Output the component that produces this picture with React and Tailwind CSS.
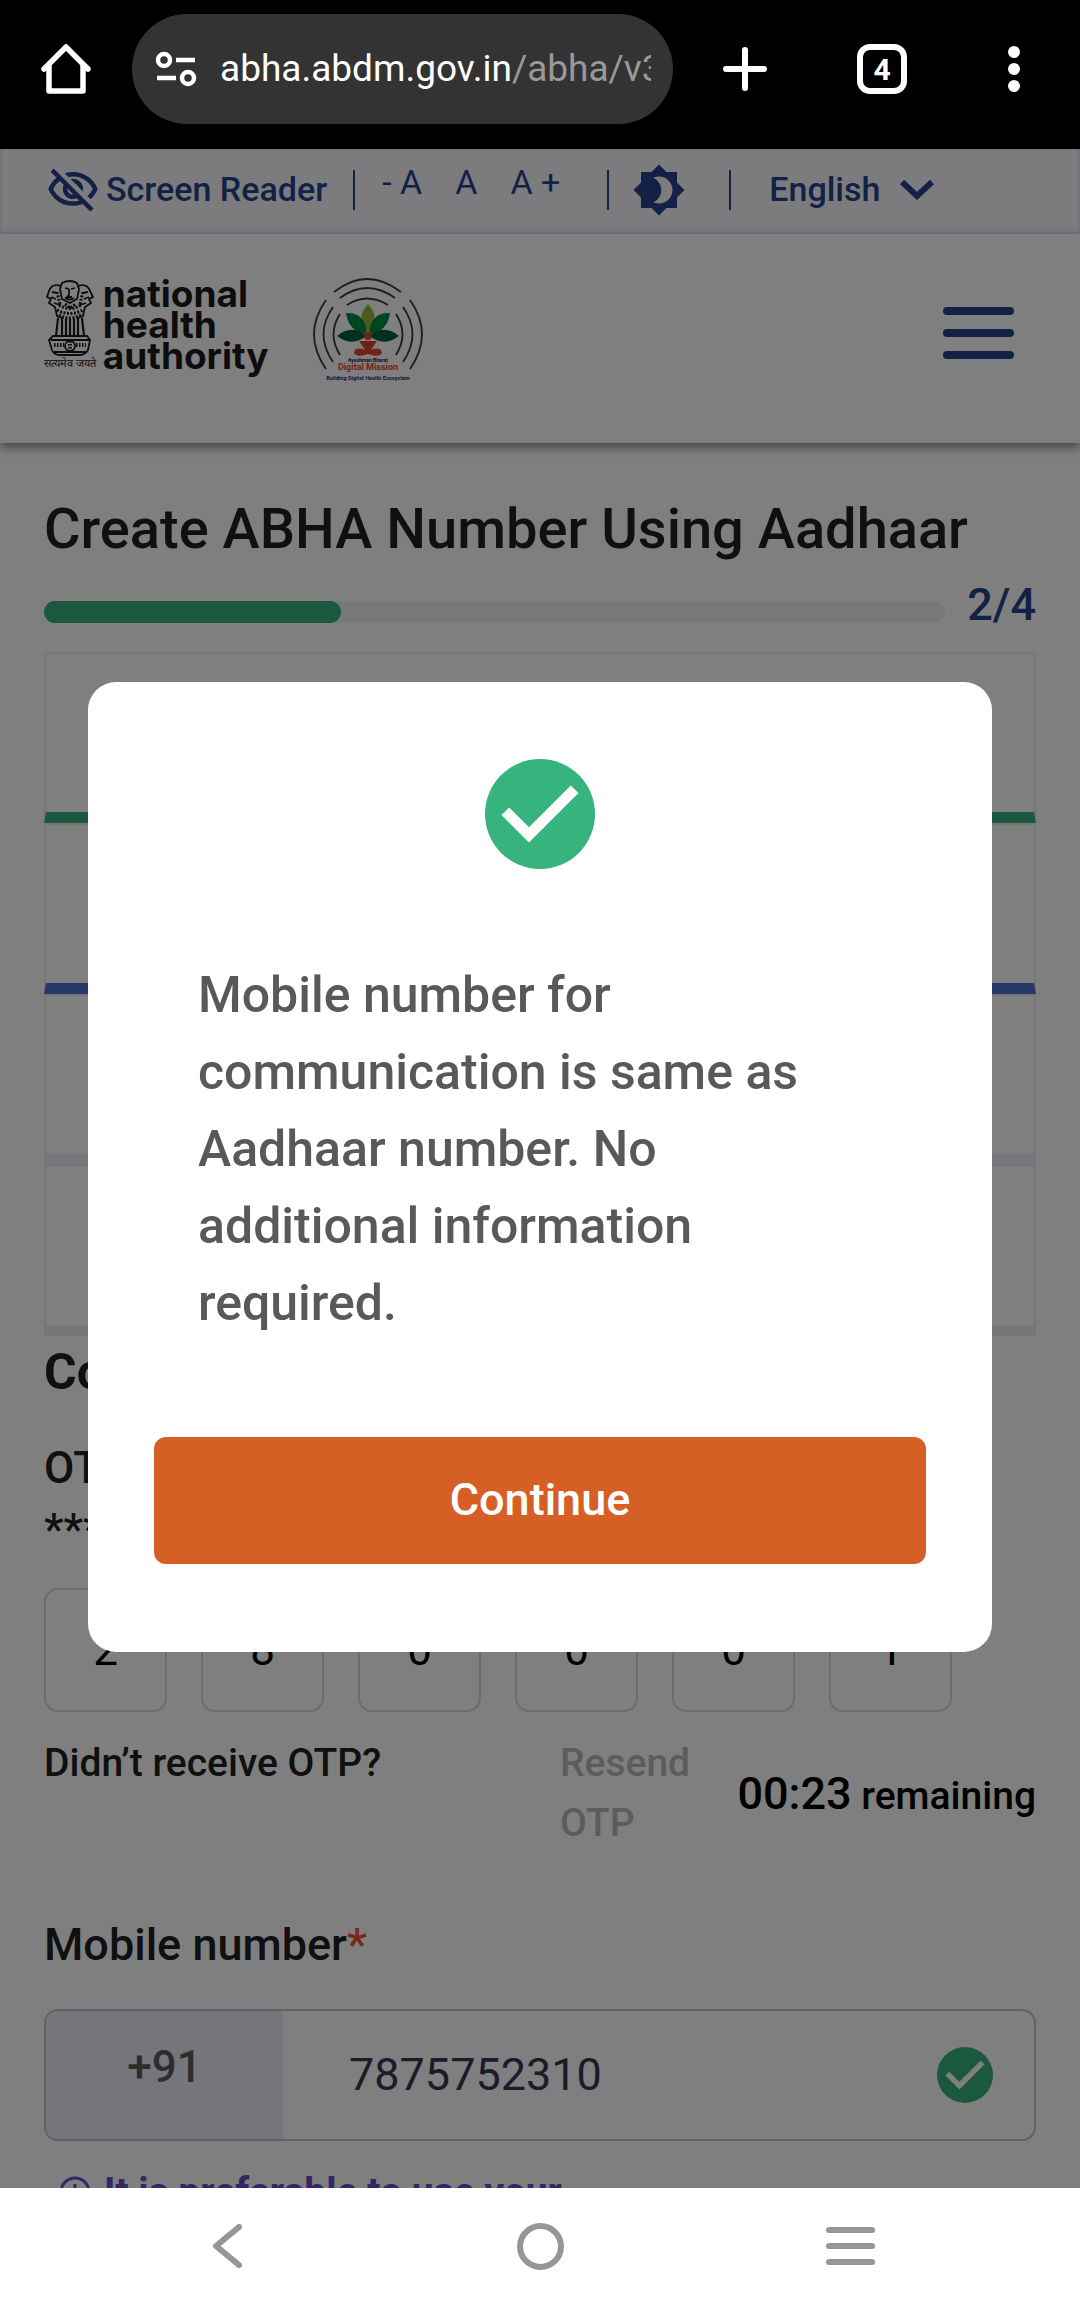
import React, { useState } from "react";

const otpDigits = ["2", "8", "0", "0", "0", "1"];
const steps = [
  "border-b-[#37b37e]",
  "border-b-[#4c6fd0]",
  "border-b-[#ededf7]",
  "border-b-[#ededf7]",
];

function CheckBadge({ className }) {
  return (
    <svg className={className} viewBox="2 2 20 20" aria-hidden="true">
      <circle cx="12" cy="12" r="10" fill="#37b37e" />
      <path d="M10 17.2l-5-5 1.4-1.4 3.6 3.6 7.6-7.6L19 8.2z" fill="#fff" />
    </svg>
  );
}

function BrowserBar() {
  return (
    <header className="flex h-[149px] items-start bg-black pt-[14px] text-white">
      <div className="flex h-[110px] w-full items-center">
        <button aria-label="Home" className="ml-[36px] flex w-[60px] justify-center">
          <svg className="h-[56px] w-[56px]" viewBox="0 0 56 56" fill="none" stroke="currentColor" strokeWidth="5.5">
            <path d="M6 28L28 6L50 28M11 24V50H45V24" strokeLinejoin="round" strokeLinecap="round" />
          </svg>
        </button>
        <div className="ml-[36px] flex h-[110px] min-w-0 flex-1 items-center rounded-full bg-[#333] px-[22px]">
          <button aria-label="Site information" className="shrink-0">
            <svg className="h-[44px] w-[44px]" viewBox="0 0 44 44" fill="none" stroke="currentColor" strokeWidth="4.5">
              <circle cx="10" cy="13" r="6" />
              <path d="M22 13H41M3 31H22" />
              <circle cx="34" cy="31" r="6" />
            </svg>
          </button>
          <div className="ml-[22px] overflow-hidden whitespace-nowrap text-[37px] leading-[50px]">
            abha.abdm.gov.in<span className="text-[#999]">/abha/v3</span>
          </div>
        </div>
        <div className="flex w-[407px] shrink-0 items-center pl-[50px]">
          <button aria-label="New tab">
            <svg className="h-[44px] w-[44px]" viewBox="0 0 44 44" stroke="currentColor" strokeWidth="6" strokeLinecap="round">
              <path d="M22 3V41M3 22H41" />
            </svg>
          </button>
          <button aria-label="Switch tabs" className="ml-[90px] flex h-[50px] w-[50px] items-center justify-center rounded-[13px] border-[6px] border-white text-[30px] font-bold">
            4
          </button>
          <button aria-label="Menu" className="ml-[100px]">
            <svg className="h-[46px] w-[14px]" viewBox="0 0 14 46" fill="currentColor">
              <circle cx="7" cy="6" r="6" />
              <circle cx="7" cy="23" r="6" />
              <circle cx="7" cy="40" r="6" />
            </svg>
          </button>
        </div>
      </div>
    </header>
  );
}

function Divider() {
  return <span className="block h-[40px] w-[2px] bg-[#25428b]" />;
}

function UtilityBar() {
  return (
    <div className="flex h-[85px] items-center border-2 border-t-0 border-[#e8e8f0] bg-[#f8f8fe] pb-[2px] text-[#25428b]">
      <button className="ml-[44px] flex items-center gap-[6px] text-[34px] font-medium">
        <svg className="h-[54px] w-[54px]" viewBox="0 0 24 24" fill="currentColor" aria-hidden="true">
          <path d="M12 6c3.79 0 7.17 2.13 8.82 5.5-.59 1.22-1.42 2.27-2.41 3.12l1.41 1.41c1.39-1.23 2.49-2.77 3.18-4.53C21.27 7.11 17 4 12 4c-1.27 0-2.49.2-3.64.57l1.65 1.65C10.66 6.09 11.32 6 12 6zm-1.07 1.14L13 9.21c.57.25 1.03.71 1.28 1.28l2.07 2.07c.08-.34.14-.7.14-1.07C16.5 9.01 14.48 7 12 7c-.37 0-.72.05-1.07.14zM2.01 3.87l2.68 2.68C3.06 7.83 1.77 9.53 1 11.5 2.73 15.89 7 19 12 19c1.52 0 2.98-.29 4.32-.82l3.42 3.42 1.41-1.41L3.42 2.45 2.01 3.87zm7.5 7.5l2.61 2.61c-.04.01-.08.02-.12.02-1.38 0-2.5-1.12-2.5-2.5 0-.05.01-.08.01-.13zm-3.4-3.4l1.75 1.75c-.23.55-.36 1.15-.36 1.78 0 2.48 2.02 4.5 4.5 4.5.63 0 1.23-.13 1.77-.36l.98.98c-.88.24-1.8.38-2.75.38-3.79 0-7.17-2.13-8.82-5.5.7-1.43 1.72-2.61 2.93-3.53z" />
        </svg>
        Screen Reader
      </button>
      <div className="ml-[26px]"><Divider /></div>
      <div className="mb-[14px] ml-[27px] flex gap-[33px] text-[34px]">
        <button>- A</button>
        <button>A</button>
        <button>A +</button>
      </div>
      <div className="ml-[47px]"><Divider /></div>
      <button aria-label="Toggle contrast" className="ml-[23px]">
        <svg className="h-[54px] w-[54px]" viewBox="0 0 24 24" fill="currentColor">
          <path fillRule="evenodd" d="M20 8.69V4h-4.69L12 .69 8.69 4H4v4.69L.69 12 4 15.31V20h4.69L12 23.31 15.31 20H20v-4.69L23.31 12 20 8.69zM12 18c-.89 0-1.74-.2-2.5-.55C11.56 16.5 13 14.42 13 12s-1.44-4.5-3.5-5.45C10.26 6.2 11.11 6 12 6c3.31 0 6 2.69 6 6s-2.69 6-6 6z" />
        </svg>
      </button>
      <div className="ml-[43px]"><Divider /></div>
      <button className="ml-[38px] flex items-center gap-[20px] text-[34px] font-medium">
        English
        <svg className="h-[22px] w-[34px]" viewBox="0 0 34 22" fill="none" stroke="currentColor" strokeWidth="6" aria-hidden="true">
          <path d="M2 3L17 17L32 3" />
        </svg>
      </button>
    </div>
  );
}

function Emblem() {
  return (
    <svg className="h-[76px] w-[50px]" viewBox="0 0 50 76" fill="none" stroke="#1b1b1b" strokeWidth="1.8" aria-hidden="true">
      <path d="M17 3q8-4 15 0l2 6-2 10-7 4-8-4-2-10zM20 8l4 1M26 9l4-1M24 9v6l-2 2h5M20 18q5 3 9 0" />
      <path d="M16 6Q7 3 4 11L2 17l4 2-2 4 6 4 2 9 5 2M33 6q9-3 12 5l3 6-4 2 2 4-6 4-2 9-5 2" />
      <path d="M7 12l5 1M6 17l5 2M9 23l6 2M43 12l-5 1M44 17l-5 2M41 23l-6 2" />
      <path strokeDasharray="2 1.5" strokeWidth="3" d="M12 12l3 12M38 12l-3 12M14 25q11 7 22 0M12 30q13 7 26 0M14 35q11 6 22 0M20 24l5 4 6-4" />
      <path strokeWidth="2.2" d="M13 38l-2 18M17 38v18M21 39v17M25 39v16M29 39v17M33 38v18M37 38l2 18" />
      <path d="M8 56h34l3 4-2 10q-3 5-8 5H15q-6 0-8-5L4 60zM6 60h38M9 72h33" />
      <circle cx="25" cy="66" r="5" />
      <path strokeDasharray="1.5 1.5" strokeWidth="4" d="M9 65h10M31 65h10M25 61v10" />
    </svg>
  );
}

function AbdmLogo() {
  return (
    <svg className="h-[104px] w-[110px]" viewBox="0 0 110 104" role="img" aria-label="Ayushman Bharat Digital Mission">
      <g fill="none" stroke="#3a3a3a" strokeWidth="1.8">
        <path d="M21 14Q54-12 88 14M27 20Q54 0 82 20M34 27Q54 14 75 27" />
        <path d="M13 22Q-11 56 13 91M20 29Q1 56 20 84M27 36Q14 56 27 77" />
        <path d="M97 22Q121 56 97 91M90 29Q109 56 90 84M83 36Q96 56 83 77" />
      </g>
      <path d="M55 26Q68 40 55 54Q42 40 55 26Z" fill="#97b93b" />
      <path d="M33 35Q52 34 54 55Q36 55 33 35ZM77 35Q58 34 56 55Q74 55 77 35Z" fill="#008a45" />
      <path d="M24 58Q38 46 54 57Q40 70 24 58ZM86 58Q72 46 56 57Q70 70 86 58Z" fill="#006338" />
      <g fill="#e3432b">
        <circle cx="55" cy="58" r="4" />
        <path d="M46 63H64L58 72Q68 68 69 75Q66 80 55 76Q44 80 41 75Q42 68 52 72Z" />
      </g>
      <text x="55" y="84" textAnchor="middle" fontSize="5" fontWeight="700" fill="#222">Ayushman Bharat</text>
      <text x="55" y="92" textAnchor="middle" fontSize="9" fontWeight="700" fill="#e3432b">Digital Mission</text>
      <text x="55" y="102" textAnchor="middle" fontSize="5.5" fontWeight="700" fill="#242a8c">Building Digital Health Ecosystem</text>
    </svg>
  );
}

function SiteHeader() {
  return (
    <div className="flex h-[209px] items-start bg-white px-[44px] pt-[44px] shadow-[0_4px_10px_rgba(40,50,70,0.6)]">
      <a href="#nha" className="flex" aria-label="National Health Authority">
        <span className="mt-[2px] flex flex-col items-center">
          <Emblem />
          <span className="text-[11px] leading-[16px] text-[#1b1b1b]">सत्यमेव जयते</span>
        </span>
        <span className="ml-[7px] font-['Inter',sans-serif] text-[37px] font-bold leading-[31px] text-[#1b1b1b]">
          <span className="block">national</span>
          <span className="block">health</span>
          <span className="block">authority</span>
        </span>
      </a>
      <a href="#abdm" className="ml-[44px]"><AbdmLogo /></a>
      <button aria-label="Open menu" className="ml-auto mr-[22px] mt-[29px] flex w-[71px] flex-col gap-[14px]">
        <span className="h-[8px] rounded-full bg-[#25428b]" />
        <span className="h-[8px] rounded-full bg-[#25428b]" />
        <span className="h-[8px] rounded-full bg-[#25428b]" />
      </button>
    </div>
  );
}

function EnrolmentForm() {
  return (
    <main className="px-[44px] pt-[48px] text-[#212121]">
      <h1 className="text-[56px] font-medium leading-[76px]">Create ABHA Number Using Aadhaar</h1>
      <div className="mt-[8px] flex items-center">
        <div role="progressbar" aria-label="Enrolment progress" aria-valuenow={33} aria-valuemin={0} aria-valuemax={100} className="mt-[14px] h-[22px] flex-1 rounded-full bg-[#f1f1f1]">
          <div className="h-full w-[33%] rounded-full bg-[#37b37e]" />
        </div>
        <span className="ml-[22px] text-[45px] font-medium leading-[60px] text-[#25428b]">2/4</span>
      </div>
      <div className="mt-[17px]">
        {steps.map((tone, i) => (
          <div key={i} className={`h-[171px] border-2 border-b-[11px] border-[#ededf5] ${tone}`} />
        ))}
      </div>
      <h2 className="mt-[6px] text-[50px] font-bold leading-[60px]">Confirm OTP</h2>
      <p className="mt-[35px] text-[44px] font-medium leading-[62px]">OTP sent to mobile number<br />******2310</p>
      <div className="mt-[27px] flex gap-[34px]">
        {otpDigits.map((d, i) => (
          <input
            key={i}
            aria-label={`OTP digit ${i + 1}`}
            defaultValue={d}
            className="h-[124px] w-[123px] rounded-[14px] border-2 border-[#d8d8d8] text-center text-[44px] text-black"
          />
        ))}
      </div>
      <div className="mt-[21px] flex text-[39px] font-medium leading-[60px]">
        <span className="w-[516px]">Didn’t receive OTP?</span>
        <button disabled className="w-[140px] text-left text-[#b9b9b9]">Resend OTP</button>
        <span className="ml-auto mt-[31px] whitespace-nowrap text-black">
          <span className="text-[45px]">00:23</span> remaining
        </span>
      </div>
      <label htmlFor="mobile" className="mt-[62px] block text-[45px] font-medium leading-[60px]">
        Mobile number<span className="text-[#f0502d]">*</span>
      </label>
      <div className="mt-[34px] flex h-[132px] items-stretch overflow-hidden rounded-[14px] border-2 border-[#c0c2c9]">
        <span className="w-[237px] bg-[#e9edf8] pt-[26px] text-center text-[44px] font-medium leading-[60px] text-[#5a5a5a]">+91</span>
        <input id="mobile" defaultValue="7875752310" className="min-w-0 flex-1 pl-[66px] text-[45px] text-[#3c3552]" />
        <CheckBadge className="mr-[41px] h-[56px] w-[56px] self-center" />
      </div>
      <p className="mt-[21px] flex items-center gap-[12px] whitespace-nowrap pl-[14px] text-[39px] font-bold leading-[60px] text-[#6a4fc9]">
        <svg className="h-[34px] w-[34px]" viewBox="0 0 34 34" fill="none" stroke="currentColor" strokeWidth="3" aria-hidden="true">
          <circle cx="17" cy="17" r="14" />
          <path d="M17 9V19M17 22V26" />
        </svg>
        It is preferable to use your
      </p>
    </main>
  );
}

function SuccessDialog({ onClose }) {
  return (
    <div className="absolute inset-0 flex items-start justify-center bg-black/50 px-[88px] pt-[533px]">
      <section role="dialog" aria-modal="true" aria-label="Mobile number confirmed" className="flex w-full flex-col rounded-[28px] bg-white px-[66px] pb-[88px] pt-[77px]">
        <CheckBadge className="mx-auto h-[110px] w-[110px]" />
        <p className="mx-[44px] mt-[88px] text-[50px] font-medium leading-[77px] text-[#595959]">
          Mobile number for communication is same as Aadhaar number. No additional information required.
        </p>
        <button onClick={onClose} className="mt-[95px] h-[127px] rounded-[12px] bg-[#d65f26] pb-[2px] text-[45px] font-medium text-white">
          Continue
        </button>
      </section>
    </div>
  );
}

function SystemNav() {
  return (
    <nav className="grid h-[116px] grid-cols-3 items-center bg-white text-[#969696]">
      <button aria-label="Back" className="flex justify-end pr-[116px]">
        <svg className="h-[46px] w-[34px]" viewBox="0 0 34 46" fill="none" stroke="currentColor" strokeWidth="6" strokeLinecap="round" strokeLinejoin="round">
          <path d="M29 4L6 23L29 42" />
        </svg>
      </button>
      <button aria-label="Home" className="flex justify-center">
        <span className="h-[47px] w-[47px] rounded-full border-[6px] border-[#969696]" />
      </button>
      <button aria-label="Recent apps" className="flex pl-[106px]">
        <span className="flex w-[49px] flex-col gap-[10px]">
          <span className="h-[6px] rounded-full bg-[#969696]" />
          <span className="h-[6px] rounded-full bg-[#969696]" />
          <span className="h-[6px] rounded-full bg-[#969696]" />
        </span>
      </button>
    </nav>
  );
}

export default function App() {
  const [open, setOpen] = useState(true);
  return (
    <div className="flex h-screen flex-col overflow-hidden bg-white font-['Roboto',sans-serif]">
      <BrowserBar />
      <div className="relative min-h-0 flex-1 overflow-hidden">
        <UtilityBar />
        <SiteHeader />
        <EnrolmentForm />
        {open && <SuccessDialog onClose={() => setOpen(false)} />}
      </div>
      <SystemNav />
    </div>
  );
}
